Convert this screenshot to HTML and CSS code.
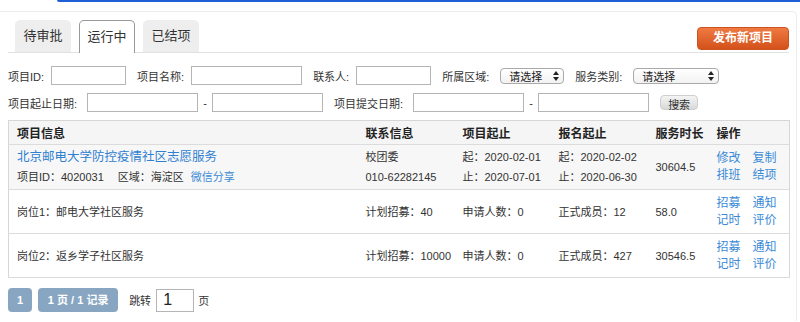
FILE: index.html
```html
<!DOCTYPE html>
<html lang="zh">
<head>
    <meta charset="UTF-8">
    <title>项目管理</title>
    <link rel="stylesheet" href="styles.css">
</head>
<body>
    <div class="top-bar"></div>

    <div class="panel">
        <div class="tab-bar">
            <div class="tabs">
                <a href="#" class="tab">待审批</a>
                <a href="#" class="tab active">运行中</a>
                <a href="#" class="tab">已结项</a>
            </div>
            <a href="#" class="btn-publish">发布新项目</a>
        </div>

        <div class="search-form">
            <div class="form-row">
                <label>项目ID:</label>
                <input type="text" class="input w-75">
                <label class="gap">项目名称:</label>
                <input type="text" class="input w-111">
                <label class="gap">联系人:</label>
                <input type="text" class="input w-75">
                <label class="gap">所属区域:</label>
                <div class="select w-64">请选择<svg width="6" height="10" viewBox="0 0 6 10"><path d="M3 0L6 4H0z M3 10L0 6H6z" fill="#222"/></svg></div>
                <label class="gap">服务类别:</label>
                <div class="select w-86">请选择<svg width="6" height="10" viewBox="0 0 6 10"><path d="M3 0L6 4H0z M3 10L0 6H6z" fill="#222"/></svg></div>
            </div>
            <div class="form-row">
                <label class="long">项目起止日期:</label>
                <input type="text" class="input w-111">
                <span class="dash">-</span>
                <input type="text" class="input w-111">
                <label class="gap long">项目提交日期:</label>
                <input type="text" class="input w-111">
                <span class="dash">-</span>
                <input type="text" class="input w-111">
                <button class="btn-search">搜索</button>
            </div>
        </div>

        <table class="project-table">
            <colgroup>
                <col style="width: 349px">
                <col style="width: 97px">
                <col style="width: 96px">
                <col style="width: 97px">
                <col style="width: 61px">
                <col style="width: 81px">
            </colgroup>
            <thead>
                <tr>
                    <th>项目信息</th>
                    <th>联系信息</th>
                    <th>项目起止</th>
                    <th>报名起止</th>
                    <th>服务时长</th>
                    <th>操作</th>
                </tr>
            </thead>
            <tbody>
                <tr class="project-row">
                    <td>
                        <a href="#" class="project-title">北京邮电大学防控疫情社区志愿服务</a>
                        <div>项目ID：4020031<span class="spacer"></span>区域：海淀区<a href="#" class="link share">微信分享</a></div>
                    </td>
                    <td>校团委<br>010-62282145</td>
                    <td>起：2020-02-01<br>止：2020-07-01</td>
                    <td>起：2020-02-02<br>止：2020-06-30</td>
                    <td>30604.5</td>
                    <td>
                        <div class="actions">
                            <a href="#" class="link">修改</a>
                            <a href="#" class="link">复制</a>
                            <a href="#" class="link">排班</a>
                            <a href="#" class="link">结项</a>
                        </div>
                    </td>
                </tr>
                <tr class="post-row">
                    <td>岗位1：邮电大学社区服务</td>
                    <td>计划招募：40</td>
                    <td>申请人数：0</td>
                    <td>正式成员：12</td>
                    <td>58.0</td>
                    <td>
                        <div class="actions">
                            <a href="#" class="link">招募</a>
                            <a href="#" class="link">通知</a>
                            <a href="#" class="link">记时</a>
                            <a href="#" class="link">评价</a>
                        </div>
                    </td>
                </tr>
                <tr class="post-row">
                    <td>岗位2：返乡学子社区服务</td>
                    <td>计划招募：10000</td>
                    <td>申请人数：0</td>
                    <td>正式成员：427</td>
                    <td>30546.5</td>
                    <td>
                        <div class="actions">
                            <a href="#" class="link">招募</a>
                            <a href="#" class="link">通知</a>
                            <a href="#" class="link">记时</a>
                            <a href="#" class="link">评价</a>
                        </div>
                    </td>
                </tr>
            </tbody>
        </table>

        <div class="pager">
            <span class="page-btn">1</span>
            <span class="page-btn wide">1 页 / 1 记录</span>
            <span class="jump">跳转</span>
            <input type="text" class="page-input" value="1">
            <span>页</span>
        </div>
    </div>
</body>
</html>
```

FILE: styles.css
```css
* {
    margin: 0;
    padding: 0;
    box-sizing: border-box;
}

html, body {
    height: 322px;
    overflow: hidden;
}

body {
    font-family: "Liberation Sans", "Noto Sans CJK SC", sans-serif;
    font-size: 11px;
    color: #333;
    background: white;
}

a {
    text-decoration: none;
}

.top-bar {
    margin-left: 57px;
    height: 2px;
    background: #1f5fd6;
    border-bottom-left-radius: 2px;
}

.panel {
    margin: 9px 3px 0 -4px;
    border: 1px solid #ececec;
    border-bottom: none;
    border-radius: 5px 5px 0 0;
    padding: 8px 7px 9px 11px;
}

.tab-bar {
    display: flex;
    justify-content: space-between;
    align-items: flex-end;
    border-bottom: 1px solid #e2e2e2;
}

.tabs {
    display: flex;
    gap: 8px;
    padding-left: 7px;
}

.tab {
    display: block;
    width: 56px;
    height: 32px;
    line-height: 32px;
    text-align: center;
    font-size: 13px;
    color: #333;
    background: #eee;
    border-radius: 5px 5px 0 0;
}

.tab.active {
    background: white;
    border: 1px solid #999;
    border-bottom: none;
    line-height: 31px;
    height: 33px;
    margin-bottom: -1px;
}

.btn-publish {
    display: block;
    height: 23px;
    line-height: 21px;
    padding: 0 15px;
    margin-bottom: 2px;
    font-size: 12px;
    font-weight: bold;
    color: white;
    background: linear-gradient(#ef7a42, #d4511b);
    border: 1px solid #cc5321;
    border-radius: 4px;
}

.search-form {
    padding-top: 13px;
}

.form-row {
    display: flex;
    align-items: center;
    height: 19px;
    margin-bottom: 8px;
}

.form-row label.gap {
    margin-left: 11px;
}

.form-row label.long {
    margin-right: 3px;
}

.input {
    height: 19px;
    border: 1px solid #b5b5b5;
    margin-left: 7px;
    font-size: 11px;
}

.w-75 { width: 75px; }
.w-111 { width: 111px; }
.w-64 { width: 64px; }
.w-86 { width: 86px; }

.select {
    display: flex;
    justify-content: space-between;
    align-items: center;
    height: 16px;
    margin-left: 11px;
    padding: 0 4px 0 8px;
    border: 1px solid #aaa;
    border-radius: 4px;
    background: linear-gradient(#fff, #f2f2f2);
    color: #222;
}

.dash {
    width: 14px;
    text-align: center;
}

.dash + .input {
    margin-left: 0;
}

.btn-search {
    margin-left: 11px;
    width: 38px;
    height: 15px;
    font-family: inherit;
    font-size: 11px;
    color: #333;
    background: linear-gradient(#f4f4f4, #d9d9d9);
    border: 1px solid #cfcfcf;
    border-radius: 4px;
}

.project-table {
    margin-top: 5px;
    width: 781px;
    border-collapse: collapse;
    table-layout: fixed;
    border: 1px solid #d6d6d6;
}

.project-table th {
    height: 24px;
    padding: 0 0 0 8px;
    text-align: left;
    font-size: 12px;
    color: #222;
    white-space: nowrap;
    background: #f5f5f5;
    border-bottom: 1px solid #dcdcdc;
}

.project-table td {
    padding: 2px 0 2px 8px;
    line-height: 20px;
    vertical-align: middle;
    border-bottom: 1px solid #dcdcdc;
    white-space: nowrap;
}

.project-row td {
    background: #f7f7f7;
    height: 45px;
}

.post-row td {
    height: 44px;
}

.project-title {
    font-size: 12.5px;
    color: #2f80d1;
}

.spacer {
    display: inline-block;
    width: 14px;
}

.link {
    color: #3a8ad6;
}

.share {
    margin-left: 7px;
}

.actions {
    display: grid;
    grid-template-columns: auto auto;
    justify-content: start;
    column-gap: 12px;
    line-height: 17px;
    font-size: 12px;
}

.pager {
    display: flex;
    align-items: center;
    margin-top: 10px;
}

.page-btn {
    height: 24px;
    line-height: 24px;
    padding: 0 9px;
    margin-right: 6px;
    color: white;
    font-weight: bold;
    background: #88a6c2;
    border-radius: 4px;
}

.page-btn.wide {
    width: 80px;
    text-align: center;
    padding: 0;
}

.jump {
    margin-left: 5px;
}

.page-input {
    width: 38px;
    height: 23px;
    margin: 0 4px 0 5px;
    padding-left: 6px;
    border: 1px solid #b5b5b5;
    font-family: inherit;
    font-size: 16px;
    color: #222;
}
```
